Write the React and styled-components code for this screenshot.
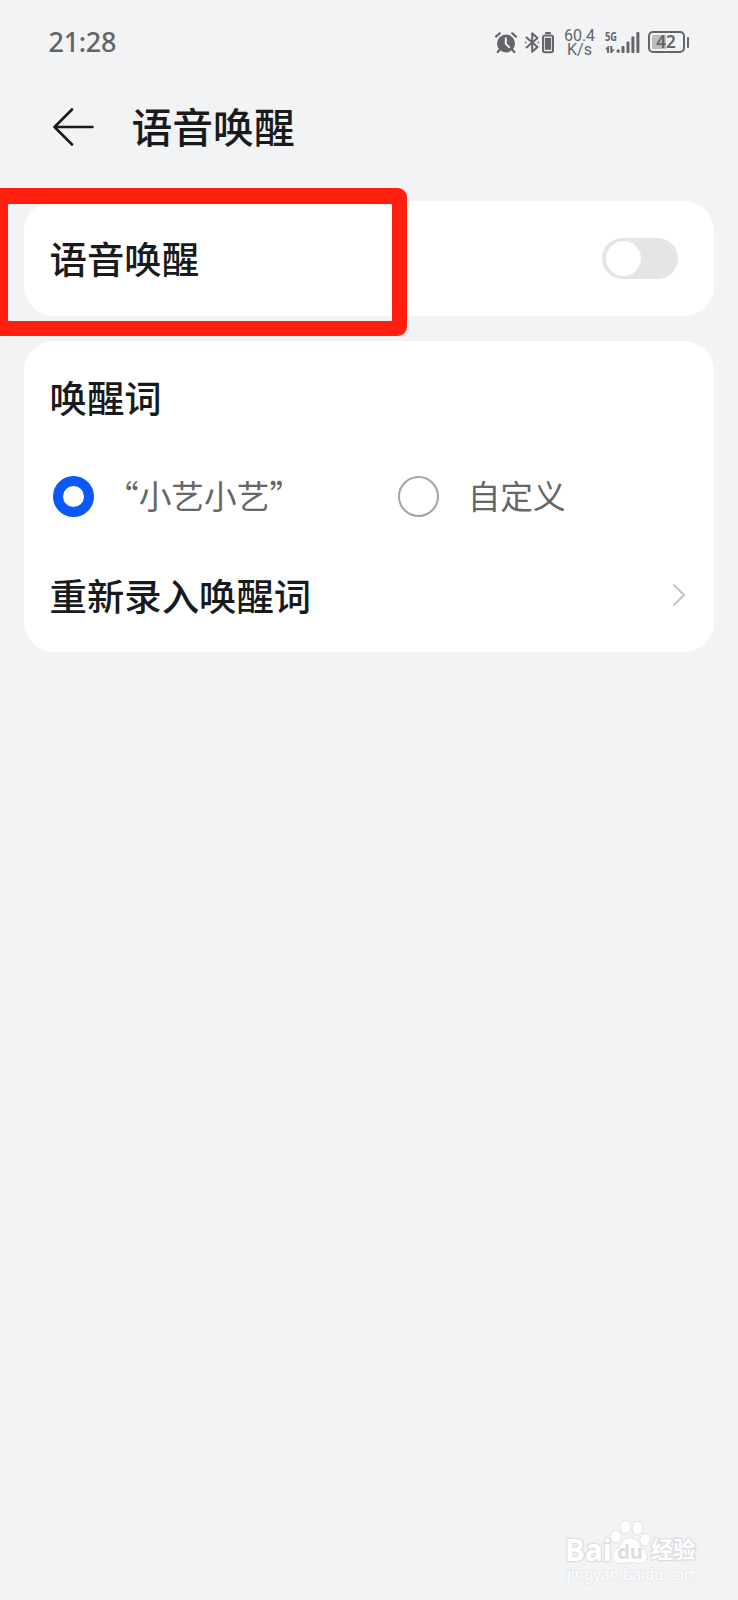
import React from 'react';
import styled, { createGlobalStyle } from 'styled-components';

const GlobalStyle = createGlobalStyle`
  * { box-sizing: border-box; }
  body {
    margin: 0;
    background: #f2f3f5;
    font-family: "Noto Sans", "Noto Sans CJK SC", sans-serif;
    color: #191a1c;
  }
`;

const Screen = styled.main`
  position: relative;
  width: 738px;
  height: 1600px;
  overflow: hidden;
  display: flex;
  flex-direction: column;
  background: #f2f3f5;
`;

const StatusBar = styled.div`
  height: 84px;
  padding: 0 49px 0 48.5px;
  display: flex;
  justify-content: space-between;
  align-items: center;
  color: #646568;
`;

const Clock = styled.span`
  font-size: 27px;
  line-height: 40px;
  font-weight: 500;
  letter-spacing: -0.3px;
`;

const StatusIcons = styled.div`
  display: flex;
  align-items: center;
  height: 40px;
`;

const Glyph = styled.svg`
  display: block;
  flex: none;
  overflow: visible;
  margin-left: ${(p) => p.$gap || 0}px;
`;

const Speed = styled.div`
  width: 34px;
  margin-left: 9px;
  display: flex;
  flex-direction: column;
  align-items: center;
  padding-top: 1px;
  font-family: Roboto, sans-serif;
  font-size: 16px;
  line-height: 14px;
`;

const Signal = styled.div`
  width: 35px;
  height: 21px;
  margin-left: 8px;
  position: relative;
`;

const Generation = styled.span`
  position: absolute;
  left: 0;
  top: -1px;
  font-size: 12.5px;
  line-height: 11px;
  font-weight: 700;
  transform: scaleX(0.74);
  transform-origin: left;
`;

const Battery = styled.div`
  width: 37px;
  height: 21.5px;
  margin-left: 8px;
  border: 2px solid #646568;
  border-radius: 5px;
  background: linear-gradient(90deg, #bbbcbe 0 14px, transparent 14px) 2px 1.5px / 100% 14px no-repeat;
  font-size: 17px;
  line-height: 17px;
  font-weight: 600;
  text-align: center;
`;

const BatteryTip = styled.i`
  width: 2.5px;
  height: 11px;
  margin-left: 2px;
  border-radius: 1px;
  background: #646568;
`;

const Header = styled.header`
  height: 117px;
  padding: 12px 0 0 53px;
  display: flex;
  align-items: flex-start;
`;

const BackIcon = styled.svg`
  display: block;
  margin-top: 12px;
`;

const Title = styled.h1`
  margin: 0 0 0 37.5px;
  font-family: "Noto Sans CJK SC", sans-serif;
  font-size: 40.8px;
  line-height: 60px;
  font-weight: 500;
`;

const Cards = styled.div`
  padding: 0 24.5px 0 24px;
  display: flex;
  flex-direction: column;
  gap: 25px;
`;

const Card = styled.section`
  height: ${(p) => p.$height}px;
  padding: 0 25px 0 25.5px;
  border-radius: 30px;
  background: #fff;
`;

const Row = styled.div`
  height: ${(p) => p.$height}px;
  display: flex;
  align-items: center;
  justify-content: space-between;
`;

const Label = styled.span`
  font-family: "Noto Sans CJK SC", sans-serif;
  font-size: 37.4px;
  line-height: 54px;
  font-weight: 500;
`;

const Switch = styled.div`
  width: 75.5px;
  height: 41px;
  padding: 3px 4px;
  margin-right: 11px;
  border-radius: 21px;
  background: #e5e5e5;
`;

const Knob = styled.div`
  width: 35px;
  height: 35px;
  border-radius: 50%;
  background: #fff;
`;

const Options = styled.div`
  height: 86px;
  padding-left: 3.5px;
  display: grid;
  grid-template-columns: 344.7px 1fr;
  align-items: center;
`;

const Option = styled.div`
  display: flex;
  align-items: center;
  gap: ${(p) => p.$gap}px;
`;

const Radio = styled.div`
  width: 41px;
  height: 41px;
  border-radius: 50%;
  border: ${(p) => (p.$checked ? '10px solid #0a59f7' : '2px solid #a3a3a3')};
`;

const OptionLabel = styled.span`
  font-family: "Noto Sans CJK SC", sans-serif;
  font-size: 32.7px;
  line-height: 48px;
  padding-bottom: 3px;
  color: #666;
`;

const CheckedLabel = styled(OptionLabel)`
  margin-left: -17px;
  white-space: nowrap;
`;

const Highlight = styled.div`
  position: absolute;
  left: -8px;
  top: 188px;
  width: 415px;
  height: 148px;
  border: 16px solid #ff2010;
  border-bottom-width: 15.5px;
  border-right-width: 15px;
  border-radius: 9px;
`;

const Watermark = styled.div`
  position: absolute;
  left: 565px;
  top: 1518px;
  width: 134px;
  color: #fff;
`;

const WatermarkBrand = styled.div`
  height: 48px;
  display: flex;
  align-items: flex-end;
  -webkit-text-stroke: 2.4px #dcdddf;
  paint-order: stroke fill;
  font-weight: 700;
`;

const BrandWord = styled.span`
  width: 45.5px;
  font-size: 30px;
  line-height: 33px;
  letter-spacing: -0.1px;
`;

const BrandSuffix = styled.span`
  margin-left: 2.5px;
  font-size: 22.3px;
  line-height: 33px;
  white-space: nowrap;
`;

const Paw = styled.svg`
  display: block;
  flex: none;
  overflow: visible;
  -webkit-text-stroke: 0;
`;

const WatermarkSite = styled.div`
  font-size: 15.7px;
  line-height: 20px;
  margin: -2px 0 0 2px;
  letter-spacing: -0.28px;
  -webkit-text-stroke: 1.5px #e5e6e8;
  paint-order: stroke fill;
`;

function AlarmIcon() {
  return (
    <Glyph width="22" height="21" viewBox="0 0 22 21" fill="none" stroke="#646568">
      <circle cx="11" cy="11.5" r="9" fill="#646568" stroke="none" />
      <path d="M1 4.6 4.8 1.2M17.2 1.2 21 4.6" strokeWidth="2.2" strokeLinecap="round" />
      <path d="M4.8 17.5 2.7 20M17.2 17.5l2.1 2.5" strokeWidth="2.2" strokeLinecap="round" />
      <path d="M10.8 6.3v5.6l3.3 3.2" stroke="#f2f3f5" strokeWidth="2" strokeLinecap="round" />
    </Glyph>
  );
}

function BluetoothIcon() {
  return (
    <Glyph $gap={8} width="14" height="21" viewBox="0 0 14 21" fill="none" stroke="#646568" strokeWidth="2">
      <path d="M1.5 5.5 12.5 15 7.2 19.8V1.2L12.5 6 1.5 15.5" strokeLinejoin="round" strokeLinecap="round" />
      <path d="M0 9.2 2 10.5 0 11.8zM14 9.2l-2 1.3 2 1.3z" fill="#646568" stroke="none" />
    </Glyph>
  );
}

function DeviceBatteryIcon() {
  return (
    <Glyph $gap={3} width="12" height="21" viewBox="0 0 12 21">
      <rect x="3" y="0" width="6" height="2" rx=".8" fill="#646568" />
      <rect x="1" y="3.5" width="10" height="16.7" rx="2" fill="none" stroke="#646568" strokeWidth="2" />
      <rect x="2.8" y="5.8" width="6.4" height="12" fill="#646568" />
    </Glyph>
  );
}

function SignalBars() {
  return (
    <Glyph width="35" height="21" viewBox="0 0 35 21" fill="#646568">
      <path d="M0 17.4 3 14h1v7H2v-3.6zM5.3 14h2v3.6h2.6L6.6 21H5.3z" />
      <rect x="11.6" y="17.6" width="3" height="3.2" rx="1" />
      <rect x="16.5" y="14" width="3" height="7" rx="1" />
      <rect x="21.5" y="9.5" width="3" height="11.5" rx="1" />
      <rect x="26.4" y="4.5" width="3" height="16.5" rx="1" />
      <rect x="31.4" y="0" width="3" height="21" rx="1" />
    </Glyph>
  );
}

export default function App() {
  return (
    <Screen>
      <GlobalStyle />
      <StatusBar>
        <Clock>21:28</Clock>
        <StatusIcons>
          <AlarmIcon />
          <BluetoothIcon />
          <DeviceBatteryIcon />
          <Speed>
            <span>60.4</span>
            <span>K/s</span>
          </Speed>
          <Signal>
            <Generation>5G</Generation>
            <SignalBars />
          </Signal>
          <Battery>42</Battery>
          <BatteryTip />
        </StatusIcons>
      </StatusBar>

      <Header>
        <BackIcon width="41" height="38" viewBox="0 0 41 38" fill="none" stroke="#191a1c" strokeWidth="2.6" strokeLinecap="round" strokeLinejoin="round">
          <path d="M19 1.5 1.5 19 19 36.5M1.5 19H39.5" />
        </BackIcon>
        <Title>语音唤醒</Title>
      </Header>

      <Cards>
        <Card $height={114.5}>
          <Row $height={114.5}>
            <Label>语音唤醒</Label>
            <Switch><Knob /></Switch>
          </Row>
        </Card>
        <Card $height={311.5}>
          <Row $height={113}><Label>唤醒词</Label></Row>
          <Options>
            <Option $gap={29}>
              <Radio $checked />
              <CheckedLabel>“小艺小艺”</CheckedLabel>
            </Option>
            <Option $gap={29}>
              <Radio />
              <OptionLabel>自定义</OptionLabel>
            </Option>
          </Options>
          <Row $height={110}>
            <Label>重新录入唤醒词</Label>
            <Glyph width="14" height="24" viewBox="0 0 14 24" fill="none" stroke="#c4c4c4" strokeWidth="2">
              <path d="M-1.5 1.5 9 12-1.5 22.5" />
            </Glyph>
          </Row>
        </Card>
      </Cards>

      <Highlight />

      <Watermark>
        <WatermarkBrand>
          <BrandWord>Bai</BrandWord>
          <Paw width="38" height="48" viewBox="0 0 38 48" fill="#fff" stroke="#dcdddf" strokeWidth="1.3">
            <ellipse cx="5" cy="18.5" rx="4.8" ry="6" />
            <ellipse cx="14.5" cy="9" rx="5" ry="6.5" />
            <ellipse cx="26.5" cy="10" rx="5" ry="6.5" />
            <ellipse cx="34" cy="21.5" rx="4.8" ry="6" />
            <path d="M19 20c5 0 8 4 10 8s7 5 7 11c0 5-4 6-8 6-3 0-5-1-9-1s-6 1-9 1c-4 0-8-2-8-7 0-5 5-7 7-10s5-8 10-8z" />
            <text x="19" y="41" textAnchor="middle" fontSize="20" fontWeight="700" fontFamily="Noto Sans" fill="#dcdddf" stroke="none">du</text>
          </Paw>
          <BrandSuffix>经验</BrandSuffix>
        </WatermarkBrand>
        <WatermarkSite>jingyan.baidu.com</WatermarkSite>
      </Watermark>
    </Screen>
  );
}
